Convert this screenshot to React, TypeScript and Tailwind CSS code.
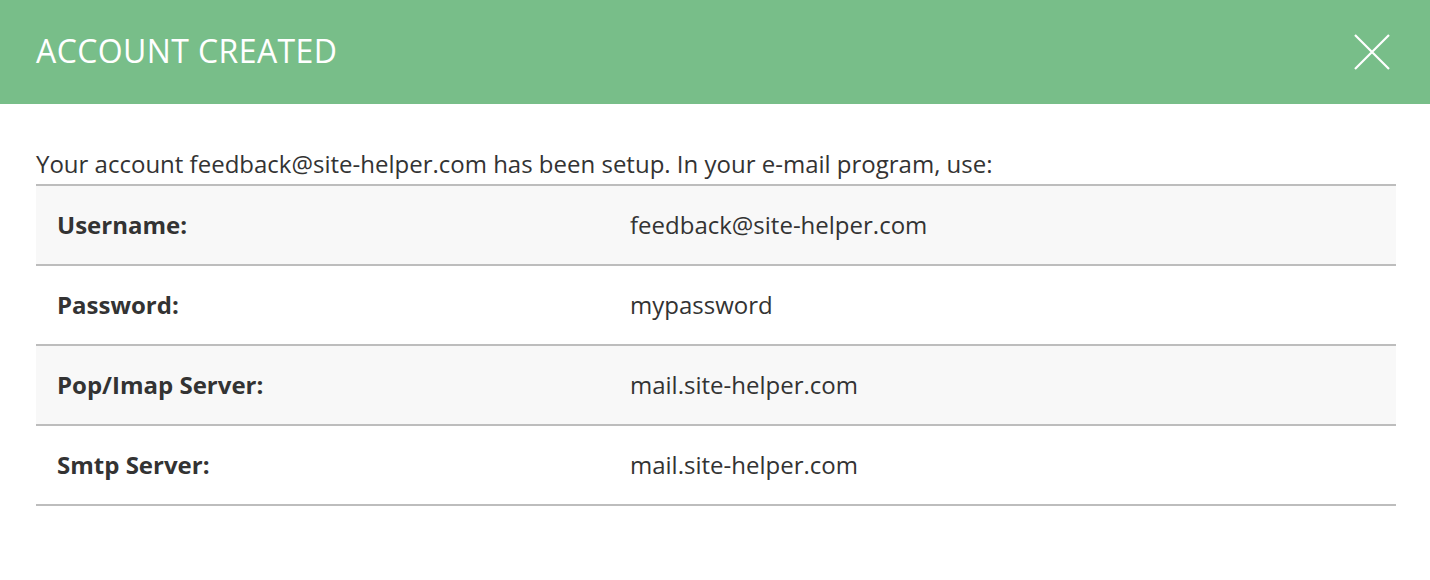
import React from "react";

const rows = [
  { label: "Username:", value: "feedback@site-helper.com" },
  { label: "Password:", value: "mypassword" },
  { label: "Pop/Imap Server:", value: "mail.site-helper.com" },
  { label: "Smtp Server:", value: "mail.site-helper.com" },
];

export default function App() {
  return (
    <div className="h-[580px] w-[1430px] bg-white font-['Open_Sans',sans-serif] text-[#333]">
      <div className="flex h-[104px] items-center justify-between bg-[#78be89] pl-9 pr-[40px]">
        <h2 className="-mt-[2px] text-[32px] font-normal uppercase tracking-[0.4px] text-white">
          Account Created
        </h2>
        <button className="flex h-9 w-9 items-center justify-center text-white" aria-label="Close">
          <svg width="36" height="36" viewBox="0 0 36 36" fill="none">
            <path d="M1 1L35 35M35 1L1 35" stroke="currentColor" strokeWidth="2.2" />
          </svg>
        </button>
      </div>

      <div className="pl-9 pr-[34px] pt-[45px]">
        <p className="text-[24px] leading-[30px]">
          Your account feedback@site-helper.com has been setup. In your e-mail program, use:
        </p>
        <div className="mt-[5px] border-t-2 border-[#bdbdbd]">
          {rows.map((row, i) => (
            <div
              key={row.label}
              className={
                "grid h-[80px] grid-cols-[594px_1fr] items-center border-b-2 border-[#bdbdbd] text-[24px] " +
                (i % 2 === 0 ? "bg-[#f8f8f8]" : "bg-white")
              }
            >
              <div className="pl-[21px] font-bold">{row.label}</div>
              <div>{row.value}</div>
            </div>
          ))}
        </div>
      </div>
    </div>
  );
}
